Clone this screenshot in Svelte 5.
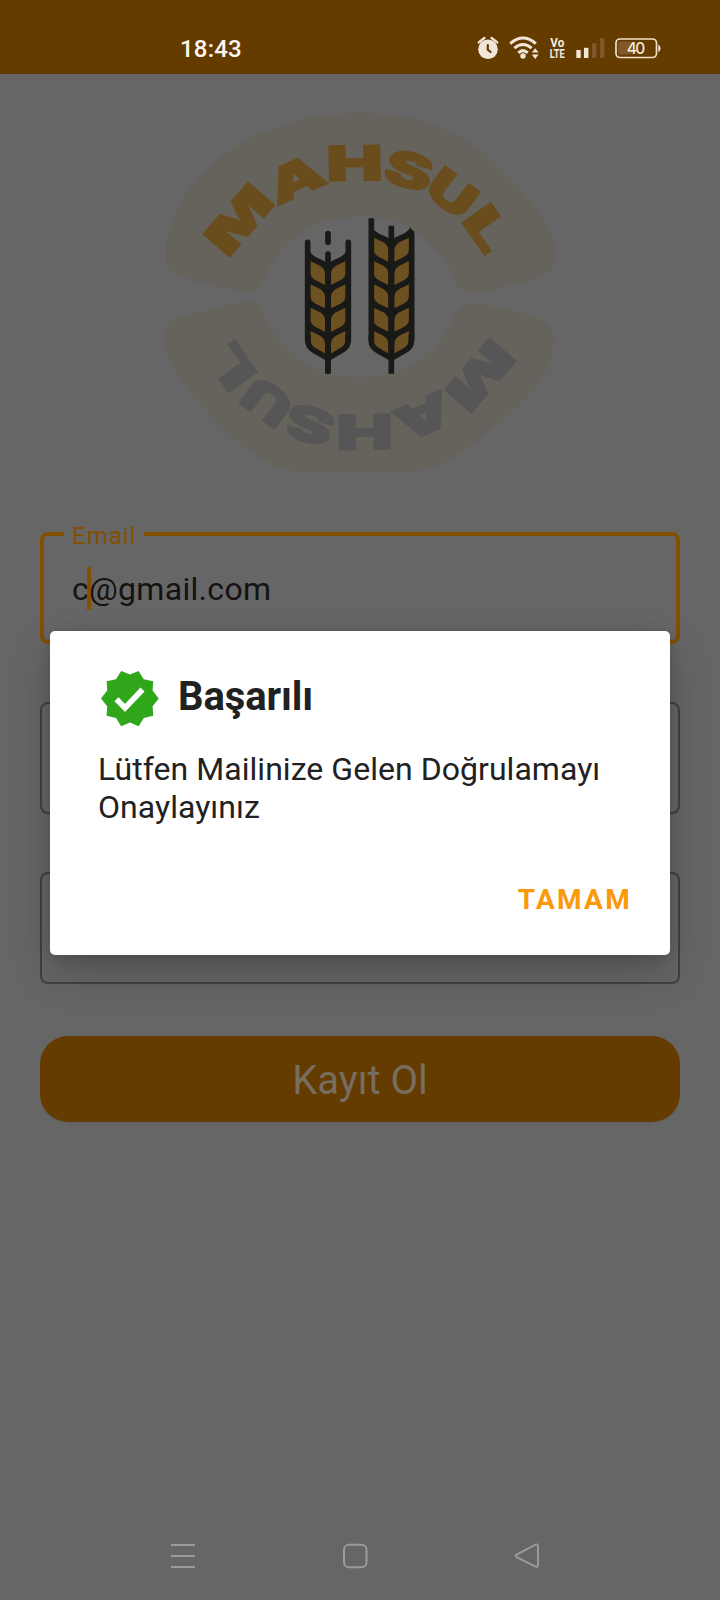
<script>
  const letters = [
    { c: 'M', x: 231, y: 255, a: -49, w: 65 },
    { c: 'A', x: 278, y: 205.5, a: -24, w: 57 },
    { c: 'H', x: 331, y: 181, a: -1, w: 50 },
    { c: 'S', x: 384, y: 182, a: 14, w: 45 },
    { c: 'U', x: 425, y: 194.5, a: 37, w: 44 },
    { c: 'L', x: 463, y: 224, a: 55, w: 40 }
  ];
  const inkBox = { M: [0.07, 0.83], A: [0.02, 0.79], H: [0.06, 0.66], S: [0.04, 0.62], U: [0.06, 0.64], L: [0.06, 0.51] };
  const place = (l) => {
    const [left, width] = inkBox[l.c];
    const sx = l.w / (width * 48);
    return `translate(${l.x} ${l.y}) rotate(${l.a}) scale(${sx} 1) translate(${-left * 48} 0)`;
  };
  const stalks = [
    { dx: 0, top: 0, leaves: [0, 70, 140, 210] },
    { dx: 190, top: -70, leaves: [-70, 0, 70, 140, 210] }
  ];
  const inner =
    'L485 291C470 295 461 293 456 284C448 258 430 240 405 226C390 219 377 217 360 217C335 217 314 223 298 235C280 248 271 264 264 280C260 290 253 292 242 291C222 288 199 283 180 276C166 270 164 259 167 243Z';
  const upperBand = 'M167 243C170 212 191 182 217 160C250 132 302 113 360 113C414 113 460 130 490 159C523 190 549 220 554 246C557 262 553 272 541 277' + inner;
  const lowerBand = 'M167 243C170 218 196 190 226 167C256 143 276 123 320 122H420C449 128 474 142 504 175C527 199 549 225 554 246C557 262 553 272 541 277' + inner;
</script>

<main class="screen">
  <header class="status">
    <span class="time">18:43</span>
    <svg class="indicators" width="188" height="30" viewBox="474 34 188 30">
      <g fill="#f2e6d8">
        <circle cx="488" cy="49.3" r="9.8" />
        <path d="M478.8 42.4l5.6-4.4M497.2 42.4l-5.6-4.4" stroke="#f2e6d8" stroke-width="2.4" stroke-linecap="round" />
        <path d="M487.8 45v4.7l2.8 2.3" fill="none" stroke="#643c00" stroke-width="2.2" stroke-linecap="round" />
        <g fill="none" stroke="#f2e6d8" stroke-width="3">
          <path d="M510.2 43.6Q523 32.5 535.8 43.6" />
          <path d="M514.4 48.2Q523 40.8 531.6 48.2" />
          <path d="M518.3 52.8Q523 48.5 527.7 52.8" />
        </g>
        <circle cx="523" cy="56" r="2.7" />
        <path d="M531.8 52.6l3.4-4.4 3.4 4.4zM531.8 54.6l3.4 4.4 3.4-4.4z" />
        <rect x="576.3" y="50" width="4.4" height="8" />
        <rect x="584" y="47.8" width="4.4" height="10.2" />
        <g fill="#80572a"><rect x="592" y="43.3" width="4.4" height="14.7" /><rect x="600" y="38" width="4.4" height="20" /></g>
        <rect x="618" y="41.5" width="14" height="13" rx="2.5" fill="#80592a" />
        <rect x="616" y="39" width="40.5" height="18.5" rx="4" fill="none" stroke="#f2e0c8" stroke-width="1.7" />
        <path d="M658.3 44.5q2.2 1 2.2 3.8t-2.2 3.8z" />
      </g>
      <g fill="#f5ebdf" text-anchor="middle">
        <text x="557.3" y="46.8" class="volte" textLength="14" lengthAdjust="spacingAndGlyphs">Vo</text>
        <text x="557.3" y="57.5" class="volte" textLength="15" lengthAdjust="spacingAndGlyphs">LTE</text>
        <text x="636" y="54" class="charge" textLength="18.5">40</text>
      </g>
    </svg>
  </header>

  <section class="content">
    <svg class="logo" width="400" height="370" viewBox="160 108 400 370">
      <g fill="#66625c">
        <path d={upperBand} />
        <path d={lowerBand} transform="rotate(180 359.6 297.2)" />
      </g>
      <g fill="#6a4d1d" stroke="#6a4d1d" class="mark">
        {#each letters as l}<text transform={place(l)}>{l.c}</text>{/each}
      </g>
      <g fill="#575656" stroke="#575656" class="mark" transform="rotate(180 359.6 297.5)">
        {#each letters as l}<text transform={place(l)}>{l.c}</text>{/each}
      </g>
      <g transform="translate(290 205) scale(.33333)" fill="none" stroke="#191918" stroke-width="17">
        {#each stalks as s}
          <g transform="translate({s.dx} 0)">
            <path
              d="M55 {136 + s.top}Q68 {154 + s.top} 88 {161 + s.top}Q106 {167 + s.top} 114 {180 + s.top}Q122 {167 + s.top} 140 {161 + s.top}Q160 {154 + s.top} 173 {136 + s.top}V425L114 455L55 425Z"
              fill="#191918"
              stroke="none"
            />
            {#each s.leaves as dy}
              <g fill="#6e5120" stroke="none">
                <path d="M61 {168 + dy}L90 {182 + dy}Q105 {191 + dy} 105 {206 + dy}V{240 + dy}L77 {226 + dy}Q61 {217 + dy} 61 {204 + dy}Z" />
                <path d="M167 {168 + dy}L138 {182 + dy}Q123 {191 + dy} 123 {206 + dy}V{240 + dy}L151 {226 + dy}Q167 {217 + dy} 167 {204 + dy}Z" />
              </g>
            {/each}
            <path d="M54 390v18q0 18 20 29l40 23l40-23q20-11 20-29v-18" />
          </g>
        {/each}
        <path d="M53 112v294M175 112v294M114 86v26M114 147v351" stroke-linecap="round" />
        <path d="M244 40v368M304 62v444M365 86v320M355 76l14 12M114 480v26" />
      </g>
    </svg>

    <form class="form">
      <div class="field focused">
        <span class="label">Email</span>
        <span class="value">c<i class="caret"></i>@gmail.com</span>
      </div>
      <div class="field"></div>
      <div class="field"></div>
      <button class="submit" type="button">Kayıt Ol</button>
    </form>
  </section>

  <nav class="nav">
    <svg width="26" height="26" viewBox="0 0 26 26"><path d="M1 2h24M1 13h24M1 24h24" /></svg>
    <svg width="26" height="26" viewBox="0 0 26 26"><rect x="2" y="1.8" width="22.5" height="22.5" rx="5" /></svg>
    <svg width="26" height="26" viewBox="0 0 26 26"><path d="M2.7 11.6L21 1.8Q24 .8 24 3.4V21.8Q24 24.4 21 23.4L2.7 14.2Q1 12.9 2.7 11.6Z" /></svg>
  </nav>

  <div class="dialog" role="alertdialog">
    <div class="heading">
      <svg width="60" height="58" viewBox="0 0 60 58">
        <path d="M30 4.4L38.6 1L43.8 9.2L53.2 11.2L52.6 20.6L58.7 28.5L52.6 36.3L53.2 45.7L43.8 47.9L38.6 56.2L30 52.5L21.2 56.2L16 47.9L6.6 45.7L7.2 36.3L1 28.5L7.2 20.6L6.6 11.2L16 9.2L21.2 1Z" fill="#30a61b" />
        <path d="M16.5 29.3l8.5 8.7L42.5 19.5" fill="none" stroke="#fff" stroke-width="5.6" />
      </svg>
      <h1>Başarılı</h1>
    </div>
    <p>Lütfen Mailinize Gelen Doğrulamayı Onaylayınız</p>
    <button class="ok" type="button">TAMAM</button>
  </div>
</main>

<style>
  :global(body) { background: #666; }
  .screen {
    position: relative;
    display: flex;
    flex-direction: column;
    width: 720px;
    height: 1600px;
    overflow: hidden;
    background: #666;
    font-family: Roboto, sans-serif;
  }
  .status {
    display: flex;
    justify-content: space-between;
    box-sizing: border-box;
    height: 74px;
    padding: 34px 58px 0 180px;
    background: #643c00;
  }
  .time { color: #fff8ee; font-size: 24px; font-weight: 500; line-height: 30px; letter-spacing: 0.2px; }
  .volte { font: 700 12px Roboto, sans-serif; }
  .charge { font: 500 15.5px Inter, sans-serif; }
  .content { flex: 1; display: flex; flex-direction: column; align-items: center; padding: 34px 40px 0; }
  .logo { flex: none; display: block; }
  .mark text { font: 900 48px Inter, sans-serif; stroke-width: 1.4px; }
  .form { display: flex; flex-direction: column; width: 100%; margin-top: 54px; }
  .field {
    position: relative;
    box-sizing: border-box;
    height: 112px;
    margin-bottom: 58px;
    border: 2px solid #414141;
    border-radius: 8px;
  }
  .focused { border: 4px solid #845000; padding: 34px 28px; }
  .label {
    position: absolute;
    left: 20px;
    top: -14px;
    padding: 0 8px;
    background: #666;
    color: #845000;
    font-size: 24px;
    line-height: 28px;
    letter-spacing: 1px;
  }
  .value { display: block; color: #131313; font-size: 32px; line-height: 38px; letter-spacing: 0.3px; white-space: nowrap; }
  .caret { display: inline-block; position: relative; top: -4px; width: 4px; height: 43px; margin: -8px -2px -9px; vertical-align: middle; background: #845000; }
  .submit {
    height: 86px;
    margin-top: -6px;
    border: 0;
    border-radius: 28px;
    background: #643c00;
    color: #776d60;
    font: 400 40px/84px Roboto, sans-serif;
    padding: 3px 0 0;
    box-shadow: 0 1px 2px #00000014;
  }
  .nav { display: flex; justify-content: space-between; padding: 0 180px 31px 170px; }
  .nav svg { fill: none; stroke: #9b9b9b; stroke-width: 2; }
  .dialog {
    position: absolute;
    left: 50px;
    top: 631px;
    box-sizing: border-box;
    width: 620px;
    height: 324px;
    padding: 39px 40px 0 49px;
    border-radius: 5px;
    background: #fff;
    box-shadow: 0 18px 40px #00000035, 0 2px 12px #00000020;
    color: #212121;
    display: flex;
    flex-direction: column;
  }
  .heading { display: flex; gap: 18px; height: 60px; padding-left: 1px; }
  h1 { margin: 0; font-size: 40px; font-weight: 700; line-height: 53px; letter-spacing: -0.1px; }
  p { margin: 20px 0 0 -1px; font-size: 32px; line-height: 38px; letter-spacing: 0.04px; }
  .ok {
    align-self: flex-end;
    margin: 56px -2px 0 0;
    padding: 0;
    border: 0;
    background: none;
    color: #fa990a;
    font: 700 28px/36px Roboto, sans-serif;
    letter-spacing: 2.3px;
  }
</style>
